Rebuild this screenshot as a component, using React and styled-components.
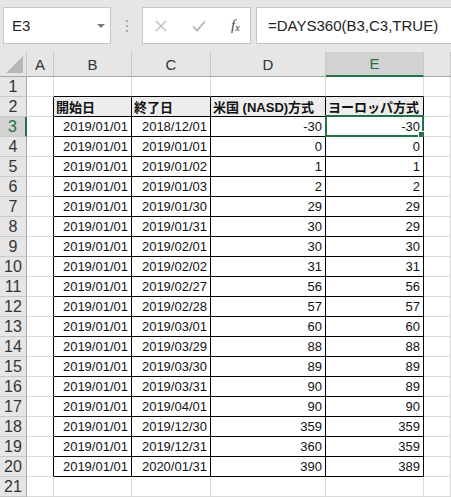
import React from 'react'
import styled, { createGlobalStyle } from 'styled-components'

const Global = createGlobalStyle`
  * { box-sizing: border-box; }
  body {
    margin: 0;
    background: #ffffff;
    font-family: "Liberation Sans", "Noto Sans CJK JP", sans-serif;
  }
`

const Page = styled.div`
  width: 451px;
  height: 497px;
  overflow: hidden;
  background: #e6e6e6;
`

const Toolbar = styled.div`
  height: 52px;
  display: flex;
  align-items: flex-start;
  padding: 7px 0 0 3px;
  background: #e6e6e6;
`

const NameBox = styled.div`
  width: 108px;
  height: 37px;
  background: #fff;
  border: 1px solid #c6c6c6;
  display: flex;
  align-items: center;
  justify-content: space-between;
  padding: 0 4px 0 8px;
  font-size: 15px;
  color: #222;
`

const Arrow = styled.span`
  width: 0;
  height: 0;
  border-left: 4px solid transparent;
  border-right: 4px solid transparent;
  border-top: 4px solid #777;
  margin-right: 1px;
`

const Dots = styled.div`
  width: 31px;
  height: 37px;
  display: flex;
  flex-direction: column;
  align-items: center;
  justify-content: center;
  gap: 3px;
  span {
    width: 2px;
    height: 2px;
    background: #a8a8a8;
  }
`

const FuncBox = styled.div`
  width: 109px;
  height: 37px;
  background: #fff;
  border: 1px solid #c6c6c6;
  display: flex;
  align-items: center;
  justify-content: space-between;
  padding: 0 10px 0 12px;
  margin-right: 5px;
`

const Fx = styled.span`
  font-family: "Liberation Serif", serif;
  font-style: italic;
  font-size: 15px;
  color: #444;
  small {
    font-size: 11px;
    position: relative;
    top: 1px;
  }
`

const FormulaBox = styled.div`
  flex: 1;
  height: 37px;
  background: #fff;
  border: 1px solid #c6c6c6;
  border-right: none;
  display: flex;
  align-items: center;
  padding-left: 11px;
  font-size: 15px;
  color: #222;
  white-space: nowrap;
`

const Sheet = styled.div`
  display: grid;
  grid-template-columns: 27px 27px 78px 79px 115px 98px 1fr;
  grid-auto-rows: 20px;
  grid-template-rows: 25px;
  background: #fff;
`

const Corner = styled.div`
  background: #e6e6e6;
  border-right: 1px solid #c8c8c8;
  border-bottom: 1px solid #a6a6a6;
  position: relative;
  &::after {
    content: '';
    position: absolute;
    right: 3px;
    bottom: 3px;
    width: 0;
    height: 0;
    border-left: 17px solid transparent;
    border-bottom: 17px solid #b7b7b7;
  }
`

const ColHead = styled.div`
  background: ${p => (p.$active ? '#d2d2d2' : '#e6e6e6')};
  border-right: 1px solid #c8c8c8;
  border-bottom: ${p => (p.$active ? '2px solid #217346' : '1px solid #a6a6a6')};
  display: flex;
  align-items: center;
  justify-content: center;
  font-size: 15px;
  color: ${p => (p.$active ? '#217346' : '#333')};
`

const RowHead = styled.div`
  background: ${p => (p.$active ? '#d2d2d2' : '#e6e6e6')};
  border-right: ${p => (p.$active ? '2px solid #217346' : '1px solid #a6a6a6')};
  border-bottom: 1px solid #c8c8c8;
  display: flex;
  align-items: center;
  justify-content: center;
  font-size: 16px;
  color: ${p => (p.$active ? '#217346' : '#333')};
`

const Cell = styled.div`
  position: relative;
  border-right: 1px solid ${p => (p.$edgeR ? '#000' : '#dadada')};
  border-bottom: 1px solid ${p => (p.$edgeB ? '#000' : '#dadada')};
  background: ${p => (p.$head ? '#ededed' : '#fff')};
  display: flex;
  align-items: center;
  justify-content: ${p => (p.$head ? 'flex-start' : 'flex-end')};
  padding: 0 3px 0 2px;
  font-size: 13px;
  font-weight: ${p => (p.$head ? 700 : 400)};
  color: #111;
  white-space: nowrap;
`

const Selection = styled.div`
  position: absolute;
  top: -2px;
  left: -1px;
  right: -1px;
  bottom: -1px;
  border: 2px solid #217346;
  pointer-events: none;
  &::after {
    content: '';
    position: absolute;
    right: -5px;
    bottom: -5px;
    width: 7px;
    height: 7px;
    background: #217346;
    border: 1px solid #fff;
  }
`

const ends = [
  '2018/12/01', '2019/01/01', '2019/01/02', '2019/01/03', '2019/01/30', '2019/01/31',
  '2019/02/01', '2019/02/02', '2019/02/27', '2019/02/28', '2019/03/01', '2019/03/29',
  '2019/03/30', '2019/03/31', '2019/04/01', '2019/12/30', '2019/12/31', '2020/01/31',
]
const us = [-30, 0, 1, 2, 29, 30, 30, 31, 56, 57, 60, 88, 89, 90, 90, 359, 360, 390]
const eu = [-30, 0, 1, 2, 29, 29, 30, 31, 56, 57, 60, 88, 89, 89, 90, 359, 359, 389]

const cols = ['A', 'B', 'C', 'D', 'E', '']

function valueAt(row, col) {
  if (row === 2) {
    return ['', '開始日', '終了日', '米国 (NASD)方式', 'ヨーロッパ方式', ''][col]
  }
  if (row >= 3 && row <= 20) {
    const i = row - 3
    return ['', '2019/01/01', ends[i], us[i], eu[i], ''][col]
  }
  return ''
}

export default function App() {
  const rows = Array.from({ length: 21 }, (_, i) => i + 1)
  return (
    <Page>
      <Global />
      <Toolbar>
        <NameBox>
          E3
          <Arrow />
        </NameBox>
        <Dots>
          <span />
          <span />
          <span />
        </Dots>
        <FuncBox>
          <svg width="12" height="12" viewBox="0 0 12 12">
            <path d="M1 1 L11 11 M11 1 L1 11" stroke="#bdbdbd" strokeWidth="1.4" fill="none" />
          </svg>
          <svg width="14" height="12" viewBox="0 0 14 12">
            <path d="M1 6.5 L5 10.5 L13 1.5" stroke="#bdbdbd" strokeWidth="2" fill="none" />
          </svg>
          <Fx>f<small>x</small></Fx>
        </FuncBox>
        <FormulaBox>=DAYS360(B3,C3,TRUE)</FormulaBox>
      </Toolbar>
      <Sheet>
        <Corner />
        {cols.map((c, i) => (
          <ColHead key={i} $active={c === 'E'}>{c}</ColHead>
        ))}
        {rows.map(r => (
          <React.Fragment key={r}>
            <RowHead $active={r === 3}>{r}</RowHead>
            {cols.map((c, ci) => {
              const inTableRow = r >= 2 && r <= 20
              const edgeR = inTableRow && ci <= 4
              const edgeB = r >= 1 && r <= 20 && ci >= 1 && ci <= 4
              return (
                <Cell key={ci} $edgeR={edgeR} $edgeB={edgeB} $head={r === 2 && ci >= 1 && ci <= 4}>
                  {valueAt(r, ci)}
                  {r === 3 && ci === 4 && <Selection />}
                </Cell>
              )
            })}
          </React.Fragment>
        ))}
      </Sheet>
    </Page>
  )
}
